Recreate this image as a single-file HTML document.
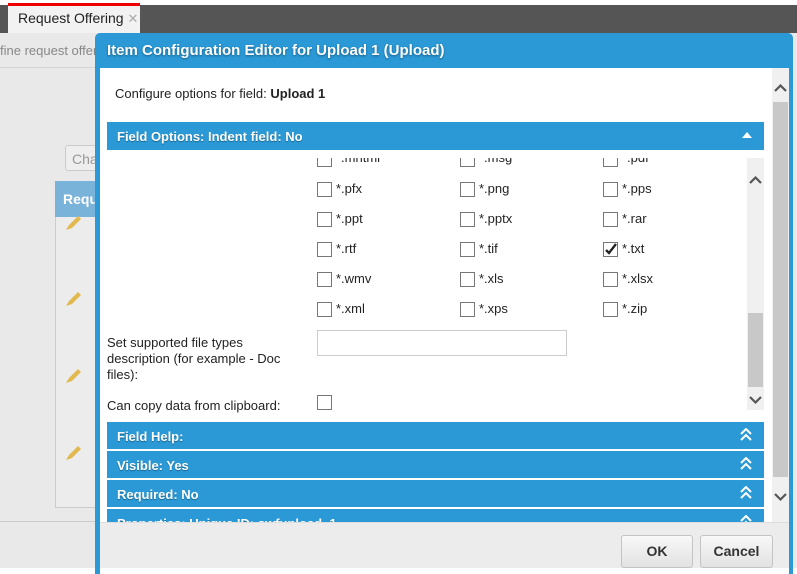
<!DOCTYPE html>
<html><head><meta charset="utf-8"><style>
*{box-sizing:border-box;margin:0;padding:0}
body{width:797px;height:574px;overflow:hidden;background:#e9e9e9;font-family:"Liberation Sans",Arial,sans-serif;position:relative;font-size:13px;color:#222}
.a{position:absolute}
.cb{position:absolute;width:15px;height:15px;border:1px solid #777;background:#fff}
.lbl{position:absolute;font-size:13px;color:#222}
.bar{position:absolute;left:107px;width:657px;height:27px;background:#2a99d6;color:#fff;font-weight:bold;font-size:13px;padding:7px 0 0 10px;text-shadow:0 1px 1px rgba(0,0,0,.35)}
.dbl{position:absolute;right:12px;top:6px}
.btn{position:absolute;top:535px;height:33px;border:1px solid #c4c4c4;border-radius:3px;background:linear-gradient(#f8f8f8,#e2e2e2);font-weight:bold;font-size:14px;text-align:center;line-height:31px;color:#333}
</style></head><body>
<div class="a" style="left:0;top:0;width:797px;height:5px;background:#fff"></div>
<div class="a" style="left:0;top:5px;width:797px;height:28px;background:#555"></div>
<div class="a" style="left:8px;top:3px;width:132px;height:30px;background:#f2f2f2;border-top:3px solid #e00"></div>
<div class="a" style="left:18px;top:10px;font-size:14px;color:#222">Request Offering <span style="color:#aaa;font-size:13px">✕</span></div>
<div class="a" style="left:0;top:43px;font-size:13px;color:#888;white-space:nowrap">fine request offer</div>
<div class="a" style="left:0;top:33px;width:100px;height:35px;border-bottom:1px solid #d4d4d4"></div>
<div class="a" style="left:65px;top:145px;width:40px;height:26px;border:1px solid #ccc;border-radius:3px;background:#eee;color:#999;padding:5px 0 0 6px;font-size:14px">Cha</div>
<div class="a" style="left:55px;top:181px;width:50px;height:327px;border:1px solid #ccc;background:#ececec"></div>
<div class="a" style="left:55px;top:181px;width:50px;height:36px;background:#7ab3d9;color:#fff;font-weight:bold;font-size:14px;padding:10px 0 0 8px">Requ</div>
<svg class="a" style="left:64px;top:214px" width="20" height="260" viewBox="0 0 20 260">
<g fill="#e2b94f"><path d="M2 16l3-5 9-9 3 3-9 9z"/><path d="M2 92l3-5 9-9 3 3-9 9z"/><path d="M2 169l3-5 9-9 3 3-9 9z"/><path d="M2 246l3-5 9-9 3 3-9 9z"/></g></svg>
<div class="a" style="left:0;top:521px;width:100px;height:1px;background:#ccc"></div>
<div class="a" style="left:0;top:568px;width:797px;height:6px;background:#fff"></div>
<!-- dialog -->
<div class="a" style="left:95px;top:33px;width:698px;height:541px;background:#2a99d6;border-radius:5px 5px 0 0"></div>
<div class="a" style="left:107px;top:42px;color:#fff;font-weight:bold;font-size:15px;text-shadow:0 1px 2px rgba(0,0,0,.4)">Item Configuration Editor for Upload 1 (Upload)</div>
<div class="a" style="left:100px;top:68px;width:689px;height:454px;background:#fff"></div>
<div class="a" style="left:100px;top:522px;width:689px;height:46px;background:#ececec;border-top:1px solid #ddd"></div>
<div class="a" style="left:100px;top:568px;width:689px;height:6px;background:#fff"></div>
<!-- outer scrollbar -->
<div class="a" style="left:772px;top:68px;width:17px;height:454px;background:#f0f0f0"></div>
<div class="a" style="left:773px;top:102px;width:15px;height:375px;background:#c8c8c8"></div>
<svg class="a" style="left:774px;top:492px" width="13" height="10"><path d="M1 2l5.5 5.5L12 2" stroke="#555" stroke-width="2.2" fill="none"/></svg>
<svg class="a" style="left:774px;top:83px" width="13" height="10"><path d="M1 8l5.5-5.5L12 8" stroke="#555" stroke-width="2.2" fill="none"/></svg>
<div class="a" style="left:115px;top:86px;font-size:13px">Configure options for field: <b>Upload 1</b></div>
<div class="bar" style="top:122px;height:28px">Field Options: Indent field: No
<svg class="dbl" style="top:10px;right:12px" width="10" height="7"><path d="M0 6L5 0l5 6z" fill="#fff"/></svg></div>
<!-- inner scroll area -->
<div class="a" style="left:100px;top:150px;width:648px;height:8px;background:#fff;z-index:2"></div>
<div class="a" style="left:747px;top:158px;width:17px;height:252px;background:#f0f0f0"></div>
<div class="a" style="left:748px;top:313px;width:15px;height:74px;background:#c8c8c8"></div>
<svg class="a" style="left:749px;top:175px" width="13" height="10"><path d="M1 8l5.5-5.5L12 8" stroke="#555" stroke-width="2.2" fill="none"/></svg>
<svg class="a" style="left:749px;top:395px" width="13" height="10"><path d="M1 2l5.5 5.5L12 2" stroke="#555" stroke-width="2.2" fill="none"/></svg>

<div class="cb" style="left:317px;top:152px"></div><div class="lbl" style="left:336px;top:150px">*.mhtml</div>
<div class="cb" style="left:460px;top:152px"></div><div class="lbl" style="left:479px;top:150px">*.msg</div>
<div class="cb" style="left:603px;top:152px"></div><div class="lbl" style="left:622px;top:150px">*.pdf</div>

<div class="cb" style="left:317px;top:182px"></div><div class="lbl" style="left:336px;top:181px">*.pfx</div>
<div class="cb" style="left:460px;top:182px"></div><div class="lbl" style="left:479px;top:181px">*.png</div>
<div class="cb" style="left:603px;top:182px"></div><div class="lbl" style="left:622px;top:181px">*.pps</div>

<div class="cb" style="left:317px;top:212px"></div><div class="lbl" style="left:336px;top:211px">*.ppt</div>
<div class="cb" style="left:460px;top:212px"></div><div class="lbl" style="left:479px;top:211px">*.pptx</div>
<div class="cb" style="left:603px;top:212px"></div><div class="lbl" style="left:622px;top:211px">*.rar</div>

<div class="cb" style="left:317px;top:242px"></div><div class="lbl" style="left:336px;top:241px">*.rtf</div>
<div class="cb" style="left:460px;top:242px"></div><div class="lbl" style="left:479px;top:241px">*.tif</div>
<div class="cb" style="left:603px;top:242px"><svg width="13" height="13" style="position:absolute;left:0;top:0"><path d="M2 7l3 3 7-9" stroke="#222" stroke-width="2.3" fill="none"/></svg></div><div class="lbl" style="left:622px;top:241px">*.txt</div>

<div class="cb" style="left:317px;top:272px"></div><div class="lbl" style="left:336px;top:271px">*.wmv</div>
<div class="cb" style="left:460px;top:272px"></div><div class="lbl" style="left:479px;top:271px">*.xls</div>
<div class="cb" style="left:603px;top:272px"></div><div class="lbl" style="left:622px;top:271px">*.xlsx</div>

<div class="cb" style="left:317px;top:302px"></div><div class="lbl" style="left:336px;top:301px">*.xml</div>
<div class="cb" style="left:460px;top:302px"></div><div class="lbl" style="left:479px;top:301px">*.xps</div>
<div class="cb" style="left:603px;top:302px"></div><div class="lbl" style="left:622px;top:301px">*.zip</div>

<div class="lbl" style="left:107px;top:335px;line-height:16px;width:190px">Set supported file types description (for example - Doc files):</div>
<div class="a" style="left:317px;top:330px;width:250px;height:26px;border:1px solid #ccc;background:#fff"></div>
<div class="lbl" style="left:107px;top:398px">Can copy data from clipboard:</div>
<div class="cb" style="left:317px;top:395px"></div>

<div class="bar" style="top:422px">Field Help:<svg class="dbl" width="12" height="14"><path d="M1 6l5-5 5 5M1 12l5-5 5 5" stroke="#fff" stroke-width="2" fill="none"/></svg></div>
<div class="bar" style="top:451px">Visible: Yes<svg class="dbl" width="12" height="14"><path d="M1 6l5-5 5 5M1 12l5-5 5 5" stroke="#fff" stroke-width="2" fill="none"/></svg></div>
<div class="bar" style="top:480px">Required: No<svg class="dbl" width="12" height="14"><path d="M1 6l5-5 5 5M1 12l5-5 5 5" stroke="#fff" stroke-width="2" fill="none"/></svg></div>
<div class="bar" style="top:509px;height:13px;overflow:hidden">Properties: Unique ID: swfupload_1<svg class="dbl" width="12" height="14"><path d="M1 6l5-5 5 5M1 12l5-5 5 5" stroke="#fff" stroke-width="2" fill="none"/></svg></div>

<div class="btn" style="left:621px;width:72px">OK</div>
<div class="btn" style="left:700px;width:73px">Cancel</div>
</body></html>
